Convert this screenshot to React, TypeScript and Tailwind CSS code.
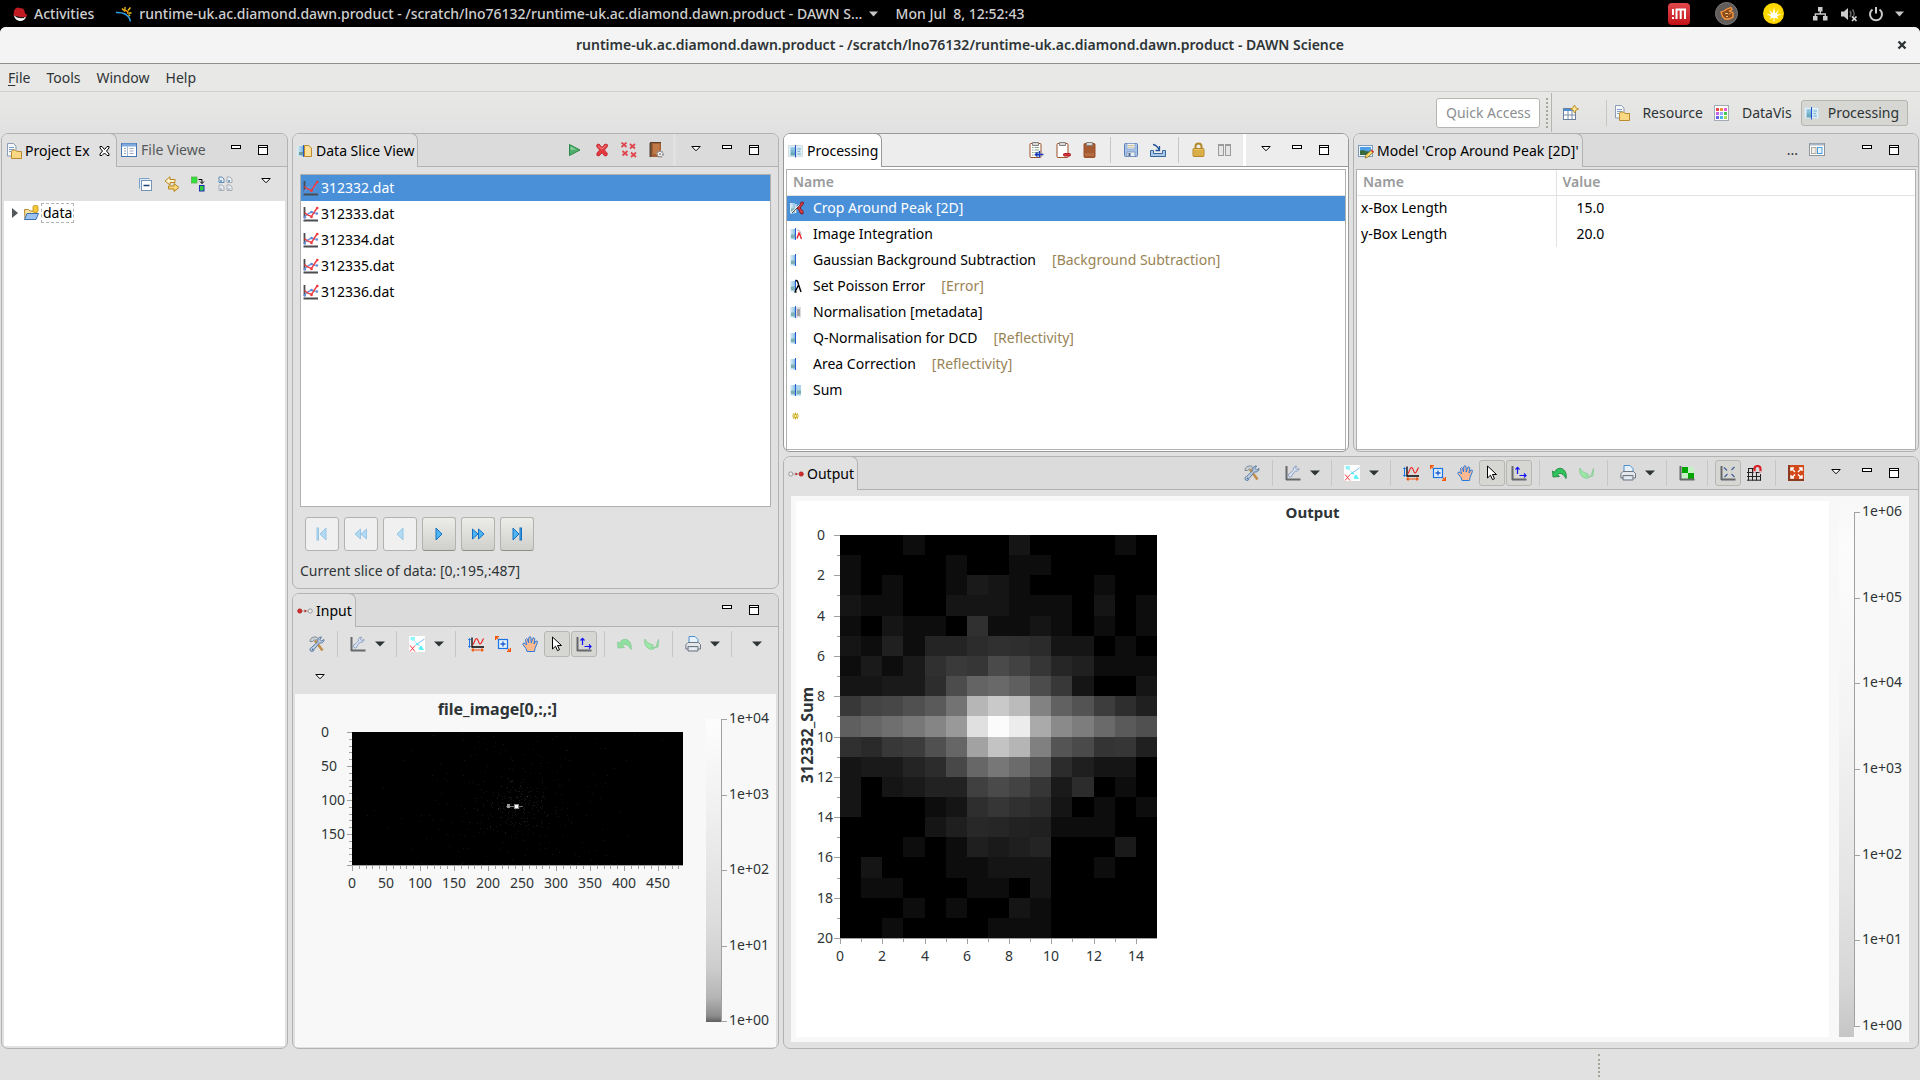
import React from "react";

type Kids = { children?: React.ReactNode };

function Svg({ children, w = 16, h = 16 }: Kids & { w?: number; h?: number }) {
  return (
    <svg width={w} height={h} viewBox={`0 0 ${w} ${h}`} className="block shrink-0" aria-hidden="true">
      {children}
    </svg>
  );
}

/* ---------- small view-chrome glyphs ---------- */
const MinGlyph = () => (
  <Svg w={10} h={12}>
    <rect x="0.5" y="1.5" width="9" height="3" fill="#fff" stroke="#000" />
  </Svg>
);
const MaxGlyph = () => (
  <Svg w={10} h={12}>
    <rect x="0.5" y="1.5" width="9" height="9" fill="#fff" stroke="#000" />
    <path d="M0 3.5h10" stroke="#000" />
  </Svg>
);
const MenuGlyph = () => (
  <Svg w={10} h={12}>
    <path d="M.8 2.5h8.4L5 6.8z" fill="#fff" stroke="#000" />
  </Svg>
);
const DownGlyph = () => (
  <Svg w={10} h={6}>
    <path d="M0 .5h10L5 5.5z" fill="#2e3436" />
  </Svg>
);
const DownGlyphLight = () => (
  <Svg w={9} h={6}>
    <path d="M0 .5h9L4.500 5.500z" fill="#c6c6c6" />
  </Svg>
);

/* ---------- tool icons ---------- */
const PlayIcon = () => (
  <Svg>
    <path d="M2.500 2.5 13 8 2.500 13.5z" fill="#4fae6b" stroke="#2c8a48" />
    <path d="M3.7 4.5 9.500 7.4l-5.8.4z" fill="#8ed3a0" />
  </Svg>
);
const CrossIcon = () => (
  <Svg>
    <path d="M3 2.5 5 2l3 3.4L11 2l2.5.7-.3 2.2L10.4 8l3 3.4-.6 2.3-2.2.2L8 10.8 5 14l-2.2-.7.2-2.3L5.6 8 2.6 4.6z" fill="#e03a40" stroke="#c4202a" strokeWidth=".8" />
    <path d="m4 4 4 3 4-3.5" stroke="#f38a8a" fill="none" />
  </Svg>
);
const CrossAllIcon = () => (
  <Svg>
    {[[0.5, 0.5], [9, 2], [1.5, 9], [10, 10.5]].map(([x, y]) => (
      <path key={`${x}-${y}`} d={`M${x} ${y}l5 4.500m0-4.500l-5 4.500`} stroke="#e0444c" strokeWidth="1.700" />
    ))}
  </Svg>
);
const BookIcon = () => (
  <Svg>
    <path d="M2 0h11v15H2z" fill="#a55f35" />
    <path d="M1.5 1v14h2V1z" fill="#5b4638" />
    <path d="M5 2h6.5v10H5z" fill="#c07a4a" />
    <path d="M2 .5h11" stroke="#55402f" />
    <circle cx="12" cy="12" r="2.6" fill="#fff" stroke="#8a8a8a" strokeDasharray="1.4 .8" strokeWidth="2.400" />
    <circle cx="12" cy="12" r="2" fill="#fff" />
    <circle cx="12" cy="12" r=".9" fill="#777" />
  </Svg>
);
const Clipboard = ({ kind }: { kind: "add" | "remove" | "full" }) => (
  <Svg>
    <rect x="2" y="1.5" width="11" height="14" rx="1" fill={kind === "full" ? "#a65a32" : "#fff"} stroke="#9c5129" />
    {kind === "full" && <path d="M3 11h9v3H3z" fill="#b56c42" />}
    {kind === "add" && <path d="M4 5.500h1.500m1 0H11M4 8h1.500m1 0H11M4 10.500h1.500m1 0H11M4 13h1.500m1 0H11" stroke="#86a08a" />}
    <path d="M4.500 0.500h6v3h-6z" fill="#d8d8d8" stroke="#85827c" />
    {kind === "add" && <path d="M7.5 12.5h8M11.500 9v6.500M9.500 10.500l-2 2 2 2" stroke="#1b3fc4" strokeWidth="1.5" fill="none" />}
    {kind === "remove" && <rect x="8.5" y="11.5" width="7" height="2.500" rx="1" fill="#e0353a" stroke="#a61a20" />}
  </Svg>
);
const SaveIcon = () => (
  <Svg>
    <rect x="1.500" y="1.500" width="13" height="13" rx="1" fill="#a9c4e6" stroke="#5a7fb8" />
    <rect x="4" y="1.5" width="8" height="5.5" fill="#f1f5fb" stroke="#7d9cc8" strokeWidth=".7" />
    <path d="M5 3.5h6M5 5.2h6" stroke="#c0b070" strokeWidth=".7" />
    <rect x="4" y="10" width="8" height="4.500" fill="#e9eef5" stroke="#6884ad" strokeWidth=".7" />
    <rect x="5.5" y="11" width="2" height="3" fill="#4a6796" />
  </Svg>
);
const ImportIcon = () => (
  <Svg>
    <path d="M.5 8.500h3v3h9v-3h3v6H.5z" fill="#a9c8e8" stroke="#39689f" />
    <path d="M3 2.500c3 .5 4.500 2 6 5M9.500 4v4.500H5.500" stroke="#23559a" strokeWidth="1.300" fill="none" />
  </Svg>
);
const LockIcon = () => (
  <Svg>
    <path d="M4.500 7V4.500a3 3 0 0 1 6 0V7" stroke="#b08a2c" strokeWidth="2" fill="none" />
    <rect x="2" y="6.500" width="11" height="8" rx="1" fill="#ecc55e" stroke="#b3862a" />
    <path d="M2.500 9h10M2.500 11h10M2.500 13h10" stroke="#c79734" />
  </Svg>
);
const ColumnsIcon = () => (
  <Svg>
    {[1.5, 8.5].map((x) => (
      <g key={x}>
        <rect x={x - 1} y="2.500" width="5" height="11" fill="#e6e6e6" stroke="#9b9b9b" />
        <path d={`M${x - 1} 3.500h5`} stroke="#9b9b9b" />
      </g>
    ))}
  </Svg>
);
const PaneIcon = () => (
  <Svg>
    <rect x=".5" y="1.500" width="15" height="12" fill="#fff" stroke="#8d949b" />
    <path d="M1 2.500h14" stroke="#a9b6c4" strokeWidth="2" />
    <rect x="2.500" y="5.500" width="4.500" height="6" fill="#eee" stroke="#b3a998" />
    <rect x="8.500" y="5.500" width="4.500" height="6" fill="#e6f3ff" stroke="#4a9fe0" />
  </Svg>
);
const CollapseIcon = () => (
  <Svg>
    <path d="M2.500 12.500v-10h10" stroke="#7aa2c9" fill="#e4eef8" />
    <rect x="4.500" y="4.500" width="10" height="10" fill="#fff" stroke="#7394b8" />
    <path d="M6.500 9.500h6" stroke="#1c3f77" strokeWidth="1.500" />
  </Svg>
);
const LinkIcon = () => (
  <Svg>
    <path d="M6 .8 1 5l5 4V6.500h5v-3H6z" fill="#fdf3cf" stroke="#b98419" />
    <path d="M10 7.500v2.500H4.500v3H10v2.500l5-4z" fill="#f6d77a" stroke="#b98419" />
  </Svg>
);
const GreenLinkIcon = () => (
  <Svg>
    <rect x=".500" y="1" width="5.500" height="6" fill="#2fe23c" stroke="#5fae4f" strokeWidth=".8" />
    <path d="M7.500 3.500H11v4m-2-2 2 2 2-2" stroke="#000" fill="none" />
    <rect x="8.500" y="9.500" width="4.500" height="5.500" fill="#2fd03c" stroke="#1a2fb5" />
  </Svg>
);
const PagesIcon = () => (
  <Svg>
    {[[1, 1], [9, 1], [1, 9], [9, 9]].map(([x, y]) => (
      <g key={`${x}${y}`}>
        <path d={`M${x} ${y}h3l2 2v3.500h-5z`} fill="#e9edf2" stroke={x === 1 && y === 1 ? "#5f8bb5" : "#a7afb8"} />
        <rect x={x + 1} y={y + 3} width="2" height="2" fill={y === 1 ? "#7ba3c8" : "#b7bfc8"} />
      </g>
    ))}
  </Svg>
);
const ToolsIcon = () => (
  <Svg>
    <path d="M1 5.500C1 2 4 .5 7.500 1l1.500 1.500-2 2-1.500-.5L3.500 5.500z" fill="#c9d0d6" stroke="#6c7883" strokeWidth=".8" />
    <path d="m6 4.500 7.500 10" stroke="#c18f4d" strokeWidth="2.600" />
    <path d="M15 3.500a3.300 3.300 0 0 1-4.500 3.300L5 13.500a2 2 0 1 1-2.500-2L9 5.500A3.300 3.300 0 0 1 12.500 1l-1.500 2.500 1.500 1.500z" fill="#bfd0e4" stroke="#4e6f99" strokeWidth=".9" />
    <circle cx="3.600" cy="13.400" r=".8" fill="#4e6f99" />
  </Svg>
);
const AxisFrame = () => (
  <g>
    <path d="M1.500 1v14" stroke="#66696b" strokeWidth="2" />
    <path d="M1 14.500h14.500" stroke="#66696b" strokeWidth="2" />
  </g>
);
const AxisWrenchIcon = () => (
  <Svg>
    <AxisFrame />
    <path d="M14 3.500a2.800 2.800 0 0 1-3.800 2.600L7 10a1.800 1.800 0 1 1-2-1.600L8.500 5a2.800 2.800 0 0 1 3-3.800L10.500 3.500l1.300 1z" fill="#dde6f4" stroke="#8497be" strokeWidth=".9" />
  </Svg>
);
const AnnotateIcon = () => (
  <Svg>
    <path d="M0 0h16v16H0z" fill="#fff" />
    <path d="M7.500 8.500 15.500 3" stroke="#5aa8e8" strokeWidth=".8" />
    <path d="M4 3.500 12 11" stroke="#9adfee" strokeWidth=".8" />
    <path d="M1.500 1h4.500v2.500L4 5 1.500 3.500z" fill="#8ff6fb" />
    <path d="M6 8.500 8.500 7l1.500 2.500z" fill="#43e8f2" />
    <path d="M12.500 9.500 15 14h-4.500l-1-2z" fill="#5ff0f8" />
    <path d="m1 9.500 5 6m0-6-5 6" stroke="#f0282e" strokeWidth=".9" />
  </Svg>
);
const GraphIcon = () => (
  <Svg>
    <path d="M4 1.500v9.500H16" stroke="#000" strokeWidth="1.300" fill="none" />
    <path d="M1.500 3v8M.3 4l1.200-1.500L2.700 4M.3 10l1.200 1.500L2.700 10" stroke="#1c75e8" fill="none" />
    <path d="M4.500 9C6.500 8 6.500 2.500 8.500 2.500s2 5.500 3.500 5.500 2-2.500 3.500-5.500" stroke="#f01818" strokeWidth="1.100" fill="none" />
    <path d="M4 14h11M5.500 12.500 4 14l1.500 1.500m8-3L15 14l-1.500 1.500" stroke="#f2550a" strokeWidth="1.200" fill="none" />
  </Svg>
);
const ZoomBoxIcon = () => (
  <Svg>
    <rect x="3.500" y="3.500" width="9" height="9" fill="#e3effb" stroke="#1b74e4" strokeWidth="1.200" />
    <path d="M8 5.500v5M5.500 8h5" stroke="#1b5fd0" strokeWidth="1.300" />
    <path d="M3 3 .8.8M.6 4V.6H4M13 13l2.300 2.300M15.400 12v3.400H12" stroke="#f2550a" strokeWidth="1.200" fill="none" />
  </Svg>
);
const HandIcon = () => (
  <Svg>
    <path d="M5 15.500 4 12.500.8 8.500 1.500 7 3 7.300 4.500 9 3.500 3.500 4.500 2.500 5.600 3.300 6.500 7 6.800 1.500 8 .6 9 1.500 9.200 7 10.800 2.200 12 1.800 12.800 2.800 12 8 14 5 15.300 5.200 15.400 6.500 13 12.500 12.500 15.500z" fill="#fdb98f" stroke="#2a7ade" strokeWidth="1" />
  </Svg>
);
const CursorIcon = () => (
  <Svg>
    <path d="M3.500 1v12l3-2.800 2 4.500 2-1-2-4.200h4z" fill="#fff" stroke="#000" />
  </Svg>
);
const AxesArrowIcon = () => (
  <Svg>
    <AxisFrame />
    <path d="M6.500 9V2.500M4.500 4.500l2-2.200 2 2.200M8.500 10.500h6.500M13 8.500l2 2-2 2" stroke="#1515f5" strokeWidth="1.200" fill="none" />
  </Svg>
);
const UndoIcon = ({ dim = false }: { dim?: boolean }) => (
  <Svg>
    <path d="M.5 6 1 12l6.500-.5-2-2c3-2.500 6-.5 8.500 4C15.500 8 11.500 2 6.500 3.500 4.500 4 3.500 5.500 2.500 7.300z" fill={dim ? "#8fe0a0" : "#2fc45c"} stroke={dim ? "#86c993" : "#1a7f3a"} strokeWidth=".8" />
  </Svg>
);
const RedoIcon = () => (
  <Svg>
    <path d="M14.500 3.500 14 11 7.500 11.500l2-2.200C6.500 8 2.500 7 1 3c-1.500 5 2 10 6.500 10.300 3 0 5-2.300 5.500-5.300z" fill="#9be8a6" stroke="#86c993" strokeWidth=".8" />
  </Svg>
);
const PrinterIcon = () => (
  <Svg>
    <path d="M4 .5h6l3 3V8H4z" fill="#e7f1fb" stroke="#4f8fd0" />
    <path d="M1 8.500 3 6.500h10.500l2 2V13H.8z" fill="#e3e6ea" stroke="#6f7782" />
    <path d="M3 10.500h10v4.500H3z" fill="#d2dae4" stroke="#6f7782" />
    <path d="M4.500 13h7" stroke="#fff" />
  </Svg>
);
const CheckerIcon = () => (
  <Svg>
    <path d="M3 2h12v12H3z" fill="#c4f0c4" />
    <path d="M3 2h6v6H3zM9 8h6v6H9z" fill="#00a600" />
    <AxisFrame />
  </Svg>
);
const AspectIcon = () => (
  <Svg>
    <AxisFrame />
    <path d="M4 2.500 7 5.500M14.500 2l-3 3M4.500 12 7.500 9M14.500 12l-3-3" stroke="#3a5f94" strokeWidth="1.100" />
  </Svg>
);
const MagnetIcon = () => (
  <Svg>
    <path d="M1 3.500h6M0 7.500h14M0 11.500h14M0 15.200h14M1.500 3v12.500M5.500 3v12.500M9.500 7v8.500M13.500 9v6.500" stroke="#222" />
    <path d="M7.500 7.500V4a3 3 0 0 1 6 0v3.500" stroke="#d8242c" strokeWidth="2.200" fill="none" />
    <path d="M6.500 7h2.200M12.400 7h2.200" stroke="#eee" strokeWidth="1.600" />
  </Svg>
);
const FitIcon = () => (
  <Svg>
    <path d="M0 0h16v16H0z" fill="#d4491a" />
    <path d="M0 0h2v16H0zM2 14h14v2H2z" fill="#8c3a20" />
    <path d="m7 7-4-4m0 3V3h3M10 7l4-4m-3 0h3v3M7 9.500 3.500 13M3 10v3h3M10 9.500l4 3.500m0-3v3h-3" stroke="#fff" strokeWidth="1.400" fill="none" />
  </Svg>
);

/* ---------- tab, tree and table icons ---------- */
const DocFolderIcon = () => (
  <Svg>
    <path d="M1.500.5h6l2.500 2.500v10H1.500z" fill="#f4f7fb" stroke="#8d9db3" />
    <path d="M3 4.500h5M3 6.500h5M3 8.500h3" stroke="#7fa0cc" />
    <path d="M5.500 8.500V15.500h10V8.500H11l-1.500-1.500H6.500z" fill="#fbd883" stroke="#bb8a2c" />
  </Svg>
);
const FileViewIcon = () => (
  <Svg>
    <rect x=".5" y="1.500" width="15" height="13" fill="#fff" stroke="#4577b5" />
    <path d="M1 3h14" stroke="#7fa8dc" strokeWidth="3" />
    <path d="M6.500 4v10" stroke="#a8bcd8" />
    <path d="M3 6.500h2M3 9h2M3 11.500h2M8.500 6.500h4M8.500 9h4M8.500 11.500h4" stroke="#9aa7bb" />
  </Svg>
);
const SliceIcon = () => (
  <Svg>
    <defs>
      <linearGradient id="slice-sky" x1="0" x2="1">
        <stop offset="0" stopColor="#e4f1f8" />
        <stop offset="1" stopColor="#6fb4dc" />
      </linearGradient>
    </defs>
    <path d="M0 3h6.500v10H0z" fill="url(#slice-sky)" />
    <path d="M2 9h4v3H2z" fill="#6d9f98" />
    <path d="M7.500 2.500h4l3 2.500v8.500h-7z" fill="#fde09a" stroke="#c08a2a" />
    <path d="M6.500 2v12" stroke="#2a58c8" />
  </Svg>
);
const ProcessTabIcon = () => (
  <Svg>
    <defs>
      <linearGradient id="proc-sky" x1="0" x2="0" y1="0" y2="1">
        <stop offset="0" stopColor="#9ad0ee" />
        <stop offset="1" stopColor="#5d9fae" />
      </linearGradient>
    </defs>
    <path d="M.5 2.500h14v11H.500z" fill="#e6f1f7" stroke="#cfdde5" />
    <path d="M2.500 4h4.500v8.500H2.500z" fill="url(#proc-sky)" />
    <path d="M8 4h5v8.500H8z" fill="#cfe6f3" />
    <path d="M9.500 6H13M9.500 8.500H12M9.500 11H13" stroke="#7fb2d2" />
    <path d="M7.500 2v12.500" stroke="#2450d0" />
  </Svg>
);
const ModelIcon = () => (
  <Svg>
    <rect x=".5" y="2.500" width="14" height="11" fill="#eef4fa" stroke="#7e9ab8" />
    <path d="M2 4h11v5H2z" fill="#4f9fe8" />
    <path d="M2 8c3-3 6 2 11 0v4H2z" fill="#356a3e" />
    <path d="m7 15 1-3 5.500-5 2 2-5.500 5z" fill="#fbe06a" stroke="#8d6a1e" strokeWidth=".8" />
    <path d="m13 7 2.500 2.500" stroke="#d43a3a" strokeWidth="1.600" />
  </Svg>
);
const FlowIcon = ({ input }: { input: boolean }) => (
  <Svg>
    <circle cx="2.800" cy="8" r="2.100" fill={input ? "#d82a2a" : "#eee"} stroke={input ? "#a81818" : "#888"} strokeWidth=".8" />
    <circle cx="13.200" cy="8" r="2.100" fill={input ? "#eee" : "#d82a2a"} stroke={input ? "#888" : "#a81818"} strokeWidth=".8" />
    <path d="M5 8h6" stroke="#999" strokeWidth=".8" />
    <path d="M7.500 6.500 9.800 8 7.500 9.500z" fill="#c01818" />
  </Svg>
);
const DataFolderIcon = () => (
  <Svg>
    <path d="M1.500 4.500h4l1.500 1.500h6v8h-11z" fill="#fbe39c" stroke="#b28a2e" />
    <path d="M1.500 14.500 4 8.500h11.500l-2.500 6z" fill="#9cc2f0" stroke="#3f6fb0" />
    <path d="M10 1.500c0-1.300 5-1.300 5 0v5c0 1.300-5 1.300-5 0z" fill="#f7c83a" stroke="#b98d1e" strokeWidth=".8" />
  </Svg>
);
const DatIcon = () => (
  <Svg>
    <path d="M1.500 1v11M.5 14.500H15" stroke="#4a4c50" strokeWidth="1.800" />
    <path d="m1.500 11 3-3 4-2 4 1.500" stroke="#6f98dc" strokeWidth="1.400" fill="none" />
    <path d="m1.500 6.500 3 2.500 4 1.500L12 5l2.500-3.500" stroke="#ee3c40" strokeWidth="1.400" fill="none" />
    <circle cx="1.800" cy="11.500" r="1.300" fill="#5f8ad6" />
    <circle cx="8.500" cy="6" r="1.300" fill="#5f8ad6" />
    <circle cx="13.800" cy="7.500" r="1.300" fill="#5f8ad6" />
    <circle cx="8.500" cy="11" r="1.300" fill="#ee3c40" />
    <circle cx="14.300" cy="2" r="1.300" fill="#ee3c40" />
  </Svg>
);
type OpKind = "crop" | "integrate" | "left" | "lambda" | "gray" | "both" | "star";
function OpIcon({ kind }: { kind: OpKind }) {
  if (kind === "star")
    return (
      <Svg>
        <path d="M6.500 4.500v7M3 8h7M4 5.500l5 5M9 5.500l-5 5" stroke="#c9ae22" strokeWidth="1.100" />
        <circle cx="6.500" cy="8" r="1.100" fill="#fff6b0" />
      </Svg>
    );
  return (
    <Svg>
      <defs>
        <linearGradient id="op-sky" x1="0" x2="1" y1="0" y2="0">
          <stop offset="0" stopColor="#e6f2f8" />
          <stop offset="1" stopColor="#86c0e2" />
        </linearGradient>
      </defs>
      <path d="M1 3h5v10.500H1z" fill="url(#op-sky)" />
      <path d="M2 8.500h4v3.500H2z" fill="#7fb0b4" />
      {kind !== "crop" && <path d="M6.500 2v12" stroke="#2b5bd0" />}
      {kind === "integrate" && (
        <g>
          <path d="M8 4c3 0 4 2 4 5" stroke="#b5b5b5" fill="none" />
          <path d="m8 12.500 2-5.500 1 2 1.500 4" stroke="#e8222a" strokeWidth="1.400" fill="none" />
        </g>
      )}
      {kind === "lambda" && <path d="M6.500 2.500c2-.5 2.500 2 3 4l2.500 7.500M9.500 7 6 14M5.500 14h2" stroke="#000" strokeWidth="1.400" fill="none" />}
      {kind === "gray" && (
        <g>
          <path d="M7 3h5v10.500H7z" fill="#dcdcde" />
          <path d="M8 5h3v7H8z" fill="#a2a2a8" />
        </g>
      )}
      {kind === "both" && (
        <g>
          <path d="M7 3h5v10.500H7z" fill="#a9d3ea" />
          <path d="M8 8.500h4v3.500H8z" fill="#7fb0b4" />
        </g>
      )}
      {kind === "crop" && (
        <g>
          <path d="M2 13 13 3M7 4l-.5 9" stroke="#eef3f6" strokeWidth="1.300" />
          <path d="m8 8 2.500-2L12 2.300l2.200-.3.300 1.800L11 8l3.300 3.500-.5 2.500-2.300-.5L10 10z" fill="#d8404a" stroke="#7a1218" strokeWidth=".9" />
          <path d="m3 13 5-5" stroke="#333" strokeWidth=".8" />
        </g>
      )}
    </Svg>
  );
}

/* ---------- panel frame ---------- */
function Panel({ tabs, tools, active = false, children }: Kids & { tabs: React.ReactNode; tools?: React.ReactNode; active?: boolean }) {
  return (
    <section className={`flex min-h-0 min-w-0 flex-col overflow-hidden rounded-[7px] border ${active ? "border-[#989a98] bg-white" : "border-[#b2b2b0] bg-[#e1e1e1]"}`}>
      <header className={`flex h-[33px] shrink-0 ${active ? "bg-[#ededed]" : "bg-[#dbdbdb]"}`}>
        {tabs}
        <div className={`flex min-w-0 flex-1 items-center justify-end border-b ${active ? "border-[#989a98]" : "border-[#b2b2b0]"}`}>{tools}</div>
      </header>
      {children}
    </section>
  );
}
function Tab({ icon, children, active = false, className = "" }: Kids & { icon: React.ReactNode; active?: boolean; className?: string }) {
  return (
    <button role="tab" aria-selected="true" className={`-mt-px flex shrink-0 items-center gap-[3px] rounded-tr-[7px] border-t border-r pr-[3px] pl-1 whitespace-nowrap text-black ${active ? "border-[#989a98] bg-white" : "border-[#b2b2b0] bg-[#e1e1e1]"} ${className}`}>
      {icon}
      {children}
    </button>
  );
}
const IconBtn = ({ label, pressed = false, children }: Kids & { label: string; pressed?: boolean }) => (
  <button aria-label={label} className="flex h-[27px] w-[27px] shrink-0 items-center justify-center">
    <span className={`flex h-[26px] w-[26px] items-center justify-center rounded-[3px] border ${pressed ? "border-[#b6b6b3] bg-[#d6d6d3]" : "border-transparent"}`}>{children}</span>
  </button>
);
const DropBtn = ({ label }: { label: string }) => (
  <button aria-label={label} className="flex h-[27px] w-[18px] shrink-0 items-center justify-center">
    <DownGlyph />
  </button>
);
const Sep = () => (
  <span className="flex h-[26px] w-[14px] shrink-0 justify-center">
    <span className="w-px bg-[#c6c6c4]" />
  </span>
);
const ViewButtons = ({ menu = true }: { menu?: boolean }) => (
  <div className="flex shrink-0 items-center pr-[19px]">
    {menu && (
      <button aria-label="View menu" className="mr-[21px]">
        <MenuGlyph />
      </button>
    )}
    <button aria-label="Minimize" className="mr-[17px]">
      <MinGlyph />
    </button>
    <button aria-label="Maximize">
      <MaxGlyph />
    </button>
  </div>
);
const PlotTools = ({ undoDim = false }: { undoDim?: boolean }) => (
  <>
    <IconBtn label="Tools"><ToolsIcon /></IconBtn>
    <Sep />
    <IconBtn label="Configure axes"><AxisWrenchIcon /></IconBtn>
    <DropBtn label="Axes options" />
    <Sep />
    <IconBtn label="Annotate"><AnnotateIcon /></IconBtn>
    <DropBtn label="Annotation options" />
    <Sep />
    <IconBtn label="Autoscale"><GraphIcon /></IconBtn>
    <IconBtn label="Zoom"><ZoomBoxIcon /></IconBtn>
    <IconBtn label="Pan"><HandIcon /></IconBtn>
    <IconBtn label="Select" pressed><CursorIcon /></IconBtn>
    <IconBtn label="Show axes" pressed><AxesArrowIcon /></IconBtn>
    <Sep />
    <IconBtn label="Undo"><UndoIcon dim={undoDim} /></IconBtn>
    <IconBtn label="Redo"><RedoIcon /></IconBtn>
    <Sep />
    <IconBtn label="Print"><PrinterIcon /></IconBtn>
    <DropBtn label="Print options" />
    <Sep />
  </>
);

/* ---------- slice navigation ---------- */
const NAV: { label: string; paths: string[]; bar?: number; off: boolean }[] = [
  { label: "First", paths: ["M12 2v12L6 8z"], bar: 3, off: true },
  { label: "Fast back", paths: ["M7.5 3v10L2 8z", "M13.500 3v10L8 8z"], off: true },
  { label: "Back", paths: ["M11 2v12L5 8z"], off: true },
  { label: "Forward", paths: ["M5 2v12l6-6z"], off: false },
  { label: "Fast forward", paths: ["M2.500 3v10l5.500-5z", "M8.500 3v10L14 8z"], off: false },
  { label: "Last", paths: ["M4 2v12l6-6z"], bar: 11, off: false },
];
const NavButton = ({ item }: { item: (typeof NAV)[number] }) => (
  <button
    aria-label={item.label}
    disabled={item.off}
    className={`flex h-[34px] w-[34px] items-center justify-center rounded-[3px] border border-[#b2b2ae] ${item.off ? "bg-[#f0f0f0]" : "border-b-[#8f8f8a] bg-linear-to-b from-[#ecece9] to-[#cfcfcc]"}`}
  >
    <Svg>
      <g fill={item.off ? "#b2daf2" : "#4fb4f2"} stroke={item.off ? "#98c6e6" : "#1571c0"} strokeWidth="1">
        {item.paths.map((d) => (
          <path key={d} d={d} />
        ))}
        {item.bar && <rect x={item.bar} y="2" width="1.500" height="12" />}
      </g>
    </Svg>
  </button>
);

/* ---------- plots ---------- */
/* Pixel intensities, one row per line, two hex digits per pixel. */
const PEAK = [
  "0000000d0000000015000000000d00",
  "0d000000000d00000d0d0000000000",
  "0d000d00000d1a150d0000000d0000",
  "150d0d00001515150d0d0d0015000d",
  "0d00150d0d00300d0d150d000d000d",
  "150d200d24242c302e2b1515000d00",
  "0d1a0d1a303a364a423626200d0d0d",
  "15151a1a2d4c64695f4c3815000015",
  "384447505a73b6c9bb8261533d2e20",
  "5f676f788599e0fbecaa8a7d6a5a50",
  "302a383c5066a2c3b580544a343620",
  "151a1a242c4867776b542c1f151500",
  "1500151a2222404a43361a2c000d00",
  "150000000d152e36302b15000d000d",
  "00000000151f282622200d0d0d0000",
  "0000000d000d1f1a1f240000001a00",
  "00150000000d0d15151500000d0000",
  "000d0d0000000d0d00150000000000",
  "0000000d000d0000150d0000000000",
  "00000d000000000d0d0d0000000000",
];

function PeakPlot() {
  const edgeX = (i: number) => 44 + Math.round((i * 317) / 15);
  const edgeY = (i: number) => 16 + Math.round((i * 403) / 20);
  return (
    <svg width="380" height="460" viewBox="0 0 380 460" className="block shrink-0 overflow-visible font-[Noto_Sans]" fontSize="14" fill="#2e3436" role="img" aria-label="312332_Sum output image">
      <g shapeRendering="crispEdges">
        <rect x="44" y="16" width="317" height="403" fill="#000" />
        {PEAK.map((row, y) =>
          Array.from({ length: 15 }, (_, x) => {
            const v = row.slice(x * 2, x * 2 + 2);
            return v === "00" ? null : (
              <rect key={`${x}-${y}`} x={edgeX(x)} y={edgeY(y)} width={edgeX(x + 1) - edgeX(x)} height={edgeY(y + 1) - edgeY(y)} fill={`#${v}${v}${v}`} />
            );
          })
        )}
        <rect x="38" y="419" width="323" height="1" fill="#a0a2a0" />
        {Array.from({ length: 21 }, (_, i) => (
          <rect key={i} x={i % 2 ? 41 : 38} y={edgeY(i)} width={i % 2 ? 3 : 6} height="1" fill="#a0a2a0" />
        ))}
        {Array.from({ length: 15 }, (_, i) => (
          <rect key={i} x={edgeX(i)} y="420" width="1" height={i % 2 ? 3 : 5} fill="#a0a2a0" />
        ))}
      </g>
      {Array.from({ length: 11 }, (_, i) => (
        <text key={i} x={i < 5 ? 25 : 37} y={edgeY(i * 2) + 5} textAnchor={i < 5 ? "middle" : "end"}>
          {i * 2}
        </text>
      ))}
      {Array.from({ length: 8 }, (_, i) => (
        <text key={i} x={edgeX(i * 2)} y="442" textAnchor="middle">
          {i * 2}
        </text>
      ))}
      <text transform="translate(17 216) rotate(-90)" textAnchor="middle" fontWeight="700" fontSize="16">
        312332_Sum
      </text>
    </svg>
  );
}

/* Detector counts: sparse background plus a denser halo around the beam. */
const SPECKS = (() => {
  let s = 77;
  const rnd = () => {
    s = (s * 16807) % 2147483647;
    return s / 2147483647;
  };
  const pts: { x: number; y: number; o: number }[] = [];
  for (let i = 0; i < 560; i++) {
    const spread = i < 180 ? 34 : i < 360 ? 90 : 320;
    const dx = (rnd() + rnd() + rnd() - 1.5) * spread;
    const dy = (rnd() + rnd() + rnd() - 1.5) * spread * 0.8;
    const x = Math.round(163 + dx);
    const y = Math.round(74 + dy);
    if (x > 0 && x < 330 && y > 0 && y < 132) pts.push({ x, y, o: i < 180 ? 0.09 : 0.08 });
  }
  return pts;
})();

function BeamPlot() {
  return (
    <svg width="384" height="174" viewBox="0 0 384 174" className="block shrink-0 font-[Noto_Sans]" fontSize="14" fill="#2e3436" role="img" aria-label="file_image input image">
      <g shapeRendering="crispEdges">
        <rect x="41" y="10" width="331" height="133" fill="#000" />
        {SPECKS.map((p, i) => (
          <rect key={i} x={41 + p.x} y={10 + p.y} width="1" height="1" fill="#fff" opacity={p.o} />
        ))}
        <rect x="36" y="143" width="336" height="1" fill="#a0a2a0" />
        {Array.from({ length: 20 }, (_, i) => (
          <rect key={i} x={i % 5 ? 38 : 36} y={10 + Math.round(i * 6.8)} width={i % 5 ? 3 : 5} height="1" fill="#a0a2a0" />
        ))}
        {Array.from({ length: 49 }, (_, i) => (
          <rect key={i} x={41 + Math.round(i * 6.8)} y="144" width="1" height={i % 5 ? 3 : 5} fill="#a0a2a0" />
        ))}
        <rect x="195" y="84" width="17" height="1" fill="#666" />
        <rect x="196" y="82" width="3" height="4" fill="#9a9a9a" />
        <rect x="198" y="84" width="6" height="1" fill="#888" />
        <rect x="203" y="82" width="5" height="5" fill="#8a8a8a" />
        <rect x="204" y="83" width="3" height="3" fill="#fff" />
      </g>
      {["0", "50", "100", "150"].map((t, i) => (
        <text key={t} x="10" y={15 + i * 34}>
          {t}
        </text>
      ))}
      {Array.from({ length: 10 }, (_, i) => (
        <text key={i} x={41 + i * 34} y="166" textAnchor="middle">
          {i * 50}
        </text>
      ))}
    </svg>
  );
}

function ColorScale({ labels, gradient, long = false }: { labels: string[]; gradient: string; long?: boolean }) {
  return (
    <div className="flex min-h-0 flex-1">
      <div className={`w-[15px] shrink-0 ${gradient} ${long ? "-mt-2 -mb-[10px]" : ""}`} />
      <ul className="flex flex-1 flex-col justify-between border-l border-[#a0a2a0]">
        {labels.map((t) => (
          <li key={t} className="flex h-px items-center gap-[2px]">
            <span className="h-px w-[5px] shrink-0 bg-[#a0a2a0]" />
            <span className="-mt-[3px]">{t}</span>
          </li>
        ))}
      </ul>
    </div>
  );
}

/* ---------- data ---------- */
const FILES = ["312332.dat", "312333.dat", "312334.dat", "312335.dat", "312336.dat"];
const OPS: { name: string; tag?: string; kind: OpKind }[] = [
  { name: "Crop Around Peak [2D]", kind: "crop" },
  { name: "Image Integration", kind: "integrate" },
  { name: "Gaussian Background Subtraction", tag: "[Background Subtraction]", kind: "left" },
  { name: "Set Poisson Error", tag: "[Error]", kind: "lambda" },
  { name: "Normalisation [metadata]", kind: "gray" },
  { name: "Q-Normalisation for DCD", tag: "[Reflectivity]", kind: "left" },
  { name: "Area Correction", tag: "[Reflectivity]", kind: "left" },
  { name: "Sum", kind: "both" },
  { name: "", kind: "star" },
];

function TopBar() {
  return (
    <div className="relative flex h-[27px] shrink-0 items-center bg-black text-[14px] leading-5 font-medium whitespace-nowrap text-[#cfcfcf]">
      <button className="ml-3 flex items-center gap-[6px]">
        <Svg>
          <path d="M2 7.500C1 5 3.500 1.500 6 1.500c1 0 2 1 3.500.8C12 2 13 6 13 7.500c2 .5 2.500 2 1.500 3C12 12.500 4 11 1 9z" fill="#c01a22" />
          <path d="M2 9.500c3 2 8 3 12 1.500-.5 2-3 4-5.500 4C5 15 2.500 12.500 2 9.500z" fill="#f4f4f4" />
          <path d="M4 10.500c2 1 5 1.500 8 1" stroke="#111" />
        </Svg>
        Activities
      </button>
      <button className="ml-[22px] flex items-center gap-[7px]">
        <Svg>
          <path d="M9 1v3M14.500 1.500 12 4.500M15.500 7H13M6 2.500l2 2M14 10l-1.500-1.500" stroke="#f7c71c" strokeWidth="1.300" />
          <path d="M8 5.500C9.500 3.500 12.500 5 12 8" stroke="#f59a12" fill="none" strokeWidth="1.500" />
          <path d="M0 6.500C6 6 13 8 14.500 15.500" stroke="#2f9fe6" strokeWidth="1.500" fill="none" />
        </Svg>
        <span>runtime-uk.ac.diamond.dawn.product - /scratch/lno76132/runtime-uk.ac.diamond.dawn.product - DAWN S...</span>
        <DownGlyphLight />
      </button>
      <time className="absolute left-1/2 -translate-x-1/2">Mon Jul&nbsp; 8, 12:52:43</time>
      <div className="ml-auto flex items-center pr-4">
        <span className="mr-[25px] flex h-[22px] w-[22px] items-center justify-center rounded-[4px] bg-linear-to-b from-[#e0474c] to-[#c40d16]">
          <Svg>
            <path d="M2 3v6M2 11v2M5.500 13V3.500H14V13M9.700 3.500V13" stroke="#fff" strokeWidth="2" fill="none" />
          </Svg>
        </span>
        <span className="mr-[25px] flex h-[23px] w-[23px] items-center justify-center rounded-full border border-[#777] bg-[#625d5a]">
          <Svg>
            <path d="M2 6 5 5l3-2 4-1.500 1 2L10.500 5 14 7v4l-4 2H6L3.500 10.500z" fill="#8a4a1a" stroke="#ff9a3c" strokeWidth="1.300" />
            <path d="M6 7.500h3M10 8.500l1.500-1.500M7 10.500h2" stroke="#ffc480" />
          </Svg>
        </span>
        <span className="mr-7 flex h-[21px] w-[21px] items-center justify-center rounded-full bg-[#ffd800]">
          <Svg>
            <path d="m8 1 1.300 6.500L13 3l-2.200 5.500L15.500 8 11 10.500 12.500 13 8 11.500 3.500 13 5 10.500.5 8l4.700.5L3 3l3.700 4.500zM7.500 11h1v4.500h-1z" fill="#fff" />
          </Svg>
        </span>
        <span className="mr-3">
          <Svg>
            <path d="M6 1h4.500v4.500H6zM1 10h4.500v4.500H1zM11 10h4.500v4.500H11z" fill="#ccc" />
            <path d="M8.300 5v3M3.300 10.500V8h10v2.500" stroke="#ccc" strokeWidth="1.300" fill="none" />
          </Svg>
        </span>
        <span className="mr-[10px]">
          <Svg w={18}>
            <path d="M1 5.500h3L8 2v12L4 10.500H1z" fill="#ccc" />
            <path d="M10 5c1 1.500 1 4 0 6M12.500 3.500c2 2.500 2 6 0 8" stroke="#666" strokeWidth="1.500" fill="none" />
            <path d="m12 10.500 4.500 4.500m0-4.500L12 15" stroke="#ddd" strokeWidth="1.600" />
          </Svg>
        </span>
        <span className="mr-[11px]">
          <Svg>
            <path d="M4.500 3.500a6 6 0 1 0 7 0M8 1v6.500" stroke="#ccc" strokeWidth="2" fill="none" />
          </Svg>
        </span>
        <DownGlyphLight />
      </div>
    </div>
  );
}

export default function App() {
  return (
    <div className="flex h-screen min-h-[900px] flex-col overflow-hidden bg-black font-[Noto_Sans,sans-serif] text-[14px] leading-5 text-[#2e3436]">
      <TopBar />
      <div className="flex min-h-0 flex-1 flex-col overflow-hidden rounded-t-[6px] bg-[#e1e1e1]">
        <div className="relative flex h-[37px] shrink-0 items-center justify-center border-b border-[#8d8f88] bg-[#f4f4f4] text-[14px] font-semibold whitespace-nowrap">
          <h1>runtime-uk.ac.diamond.dawn.product - /scratch/lno76132/runtime-uk.ac.diamond.dawn.product - DAWN Science</h1>
          <button aria-label="Close window" className="absolute right-[13px]">
            <Svg w={10} h={10}>
              <path d="m1.500 1.500 7 7m0-7-7 7" stroke="#2e3436" strokeWidth="2.400" />
            </Svg>
          </button>
        </div>

        <nav className="flex h-7 shrink-0 items-center gap-4 border-b border-[#cfcfcc] bg-[#e8e8e6] px-2">
          <button><span className="underline underline-offset-2">F</span>ile</button>
          <button>Tools</button>
          <button>Window</button>
          <button>Help</button>
        </nav>

        <div className="flex h-[41px] shrink-0 items-center justify-end bg-linear-to-b from-[#e8e8e6] to-[#e1e1e1] pr-3">
          <input aria-label="Quick Access" placeholder="Quick Access" className="h-[30px] w-[104px] rounded-[3px] border border-[#b4b4b0] bg-white px-2 text-center placeholder:text-[#8b8e8f]" />
          <span className="ml-[6px] h-[30px] border-l-2 border-dotted border-[#a5a599]" />
          <span className="ml-[3px] h-[39px] w-px bg-[#b4b4b0]" />
          <button aria-label="Open perspective" className="ml-[11px]">
            <Svg>
              <rect x=".5" y="3.500" width="12" height="11" fill="#fff" stroke="#6a7f99" />
              <path d="M1 5h11" stroke="#4b8edb" strokeWidth="2" />
              <path d="M5 6v8M1 10h11M9 6v8" stroke="#7b8ca0" />
              <path d="m11.500 0 1.300 2.700 2.700 1.300-2.700 1.300-1.300 2.700-1.300-2.700L7.500 4l2.700-1.300z" fill="#fbe79a" stroke="#bd8a1a" strokeWidth=".9" />
            </Svg>
          </button>
          <span className="ml-[27px] h-[26px] w-px bg-[#c6c6c4]" />
          <button className="ml-[7px] flex items-center gap-3">
            <DocFolderIcon />
            Resource
          </button>
          <button className="ml-[11px] flex items-center gap-3">
            <Svg>
              <rect x=".5" y=".5" width="14" height="15" fill="#fff" stroke="#a3a9b5" />
              <path d="M2 3h3v3H2z" fill="#e04a4a" />
              <path d="M6 3h3v3H6z" fill="#f0923a" />
              <path d="M10 3h3v3h-3z" fill="#e85ad0" />
              <path d="M2 7h3v3H2z" fill="#c862e8" />
              <path d="M6 7h3v3H6z" fill="#9aa8ff" />
              <path d="M10 7h3v3h-3z" fill="#42c85a" />
              <path d="M2 11h3v3H2z" fill="#6a62e8" />
              <path d="M6 11h3v3H6z" fill="#44b8e8" />
              <path d="M10 11h3v3h-3z" fill="#a0e05a" />
            </Svg>
            DataVis
          </button>
          <button className="ml-[9px] flex h-[26px] items-center gap-2 rounded-[3px] border border-[#b4b4b0] bg-[#d6d6d3] pr-2 pl-[2px]">
            <ProcessTabIcon />
            Processing
          </button>
        </div>

        <main className="grid min-h-0 flex-1 grid-cols-[287fr_487fr_1136fr] gap-1 px-px">
          <Panel
            tabs={
              <>
                <Tab icon={<DocFolderIcon />} className="w-[115px]">
                  Project Ex
                  <span className="mr-[3px] ml-auto">
                    <Svg w={11} h={12}>
                      <path d="M1 1.500h2l2.500 3 2.500-3h2V3L7.500 6 10 9v1.500H8L5.500 8 3 10.500H1V9L3.500 6 1 3z" fill="#fff" stroke="#000" />
                    </Svg>
                  </span>
                </Tab>
                <button role="tab" aria-selected="false" className="flex shrink-0 items-center gap-1 border-b border-[#b2b2b0] pl-1 text-[#55595b]">
                  <FileViewIcon />
                  File Viewe
                </button>
              </>
            }
            tools={<ViewButtons menu={false} />}
          >
            <div className="flex h-[34px] shrink-0 items-center justify-end gap-[11px] pr-4">
              <button aria-label="Collapse all"><CollapseIcon /></button>
              <button aria-label="Link with editor"><LinkIcon /></button>
              <button aria-label="Focus"><GreenLinkIcon /></button>
              <button aria-label="Filters"><PagesIcon /></button>
              <button aria-label="View menu" className="-mt-1 ml-4"><MenuGlyph /></button>
            </div>
            <div className="mx-[2px] mb-[2px] flex-1 bg-white pt-px">
              <div className="flex h-[22px] items-center pl-2 text-black">
                <Svg w={6} h={10}>
                  <path d="M0 0v10l6-5z" fill="#55585a" />
                </Svg>
                <span className="mr-[2px] ml-[5px]"><DataFolderIcon /></span>
                <span className="border border-dashed border-[#b5b5b5] px-px leading-[18px]">data</span>
              </div>
            </div>
          </Panel>

          <div className="grid min-h-0 min-w-0 grid-rows-2 gap-1">
            <Panel
              tabs={<Tab icon={<SliceIcon />}>Data Slice View</Tab>}
              tools={
                <>
                  <IconBtn label="Run"><PlayIcon /></IconBtn>
                  <IconBtn label="Remove"><CrossIcon /></IconBtn>
                  <IconBtn label="Remove all"><CrossAllIcon /></IconBtn>
                  <IconBtn label="Help book"><BookIcon /></IconBtn>
                  <span className="mr-[15px] ml-[4px] w-[3px] self-stretch bg-[#e1e1e1]" />
                  <ViewButtons />
                </>
              }
            >
              <ul className="mx-[7px] mt-[7px] min-h-0 flex-1 border border-[#b0b0ae] bg-white text-black">
                {FILES.map((f, i) => (
                  <li key={f} className={`flex h-[26px] items-center gap-[2px] pl-[2px] ${i === 0 ? "bg-[#4a90d9] text-white" : ""}`}>
                    <DatIcon />
                    {f}
                  </li>
                ))}
              </ul>
              <div className="mt-[10px] flex shrink-0 gap-[5px] pl-3">
                {NAV.map((n) => (
                  <NavButton key={n.label} item={n} />
                ))}
              </div>
              <p className="mt-[10px] mb-[7px] shrink-0 pl-[7px]">Current slice of data: [0,:195,:487]</p>
            </Panel>

            <Panel tabs={<Tab icon={<FlowIcon input />}>Input</Tab>} tools={<ViewButtons menu={false} />}>
              <div className="flex h-[34px] shrink-0 items-center pl-[10px]">
                <PlotTools undoDim />
                <span className="ml-[10px]"><DropBtn label="More" /></span>
              </div>
              <div className="flex h-[33px] shrink-0 items-center pl-[22px]">
                <button aria-label="View menu"><MenuGlyph /></button>
              </div>
              <div className="mx-[2px] mb-px flex min-h-0 flex-1 bg-[#f8f8f8]">
                <div className="flex min-w-0 flex-1 flex-col">
                  <h2 className="mt-[5px] mb-[3px] pr-[6px] text-center text-[16px] font-bold">file_image[0,:,:]</h2>
                  <div className="pl-4">
                    <BeamPlot />
                  </div>
                </div>
                <div className="flex w-[70px] flex-col pt-[25px] pb-[25px]">
                  <ColorScale
                    labels={["1e+04", "1e+03", "1e+02", "1e+01", "1e+00"]}
                    gradient="bg-[linear-gradient(to_bottom,#fdfdfd,#f0f0f0_30%,#dcdcdc_68%,#cdcdcd_82%,#b4b4b4_92%,#8c8c8c_98%,#5f5f5f)]"
                  />
                </div>
              </div>
            </Panel>
          </div>

          <div className="grid min-h-0 min-w-0 grid-rows-[319fr_593fr] gap-1">
            <div className="grid min-h-0 grid-cols-2 gap-1">
              <Panel
                active
                tabs={<Tab active icon={<ProcessTabIcon />}>Processing</Tab>}
                tools={
                  <>
                    <IconBtn label="Add operation"><Clipboard kind="add" /></IconBtn>
                    <IconBtn label="Remove operation"><Clipboard kind="remove" /></IconBtn>
                    <IconBtn label="Clear operations"><Clipboard kind="full" /></IconBtn>
                    <Sep />
                    <IconBtn label="Save"><SaveIcon /></IconBtn>
                    <IconBtn label="Load"><ImportIcon /></IconBtn>
                    <Sep />
                    <IconBtn label="Lock"><LockIcon /></IconBtn>
                    <IconBtn label="Columns"><ColumnsIcon /></IconBtn>
                    <span className="mr-[15px] ml-[4px] w-[3px] self-stretch bg-white" />
                    <ViewButtons />
                  </>
                }
              >
                <div className="mx-[2px] mt-[2px] mb-px min-h-0 flex-1 border border-[#b0b0ae] bg-white">
                  <table className="w-full table-fixed border-collapse text-black">
                    <thead>
                      <tr className="h-[25px] border-b border-[#e2e2e2]">
                        <th className="p-0 pl-[6px] text-left font-semibold text-[#999b9c]">Name</th>
                      </tr>
                    </thead>
                    <tbody>
                      {OPS.map((o, i) => (
                        <tr key={i} className={`h-[26px] ${i === 0 ? "bg-[#4a90d9] text-white" : ""}`}>
                          <td className="p-0 pl-[2px]">
                            <span className="flex items-center whitespace-nowrap">
                              <OpIcon kind={o.kind} />
                              <span className="ml-2">{o.name}</span>
                              {o.tag && <span className="ml-4 text-[#988355]">{o.tag}</span>}
                            </span>
                          </td>
                        </tr>
                      ))}
                    </tbody>
                  </table>
                </div>
              </Panel>

              <Panel
                tabs={<Tab icon={<ModelIcon />}>Model &apos;Crop Around Peak [2D]&apos;</Tab>}
                tools={
                  <>
                    <button className="mr-[11px]">...</button>
                    <button aria-label="Editor layout" className="mr-[37px]"><PaneIcon /></button>
                    <ViewButtons menu={false} />
                  </>
                }
              >
                <div className="mx-[2px] mt-[2px] mb-px min-h-0 flex-1 border border-[#b0b0ae] bg-white">
                  <table className="w-full table-fixed border-collapse text-black">
                    <thead>
                      <tr className="h-[25px] border-b border-[#e2e2e2] text-left text-[#999b9c]">
                        <th className="w-[199px] border-r border-[#e2e2e2] p-0 pl-[6px] font-semibold">Name</th>
                        <th className="p-0 pl-[6px] font-semibold">Value</th>
                      </tr>
                    </thead>
                    <tbody>
                      {[["x-Box Length", "15.0"], ["y-Box Length", "20.0"]].map(([k, v]) => (
                        <tr key={k} className="h-[26px]">
                          <td className="border-r border-[#e2e2e2] p-0 pl-1">{k}</td>
                          <td className="p-0 pl-5">{v}</td>
                        </tr>
                      ))}
                    </tbody>
                  </table>
                </div>
              </Panel>
            </div>

            <Panel
              tabs={<Tab icon={<FlowIcon input={false} />}>Output</Tab>}
              tools={
                <>
                  <PlotTools />
                  <IconBtn label="Downsample"><CheckerIcon /></IconBtn>
                  <Sep />
                  <IconBtn label="Keep aspect ratio" pressed><AspectIcon /></IconBtn>
                  <IconBtn label="Snap to grid"><MagnetIcon /></IconBtn>
                  <Sep />
                  <IconBtn label="Rescale"><FitIcon /></IconBtn>
                  <span className="w-[22px]" />
                  <ViewButtons />
                </>
              }
            >
              <div className="my-[6px] mr-[9px] ml-[7px] flex min-h-0 flex-1 bg-[#f8f8f8] py-[5px] pl-[5px]">
                <div className="flex min-w-0 flex-1 flex-col bg-white">
                  <h2 className="-mb-[3px] pt-px text-center text-[15px] font-bold">Output</h2>
                  <PeakPlot />
                </div>
                <div className="ml-[10px] flex w-[70px] flex-col pt-[11px] pb-[10px]">
                  <ColorScale
                    long
                    labels={["1e+06", "1e+05", "1e+04", "1e+03", "1e+02", "1e+01", "1e+00"]}
                    gradient="bg-[linear-gradient(to_bottom,#f8f8f8,#fcfcfc_8%,#f4f4f4_40%,#e4e4e4_72%,#d6d6d6_90%,#c6c6c6)]"
                  />
                </div>
              </div>
            </Panel>
          </div>
        </main>

        <footer className="h-[31px] shrink-0 pt-[5px]">
          <div className="h-[23px] w-5/6 border-r-2 border-dotted border-[#a5a599]" />
        </footer>
      </div>
    </div>
  );
}
